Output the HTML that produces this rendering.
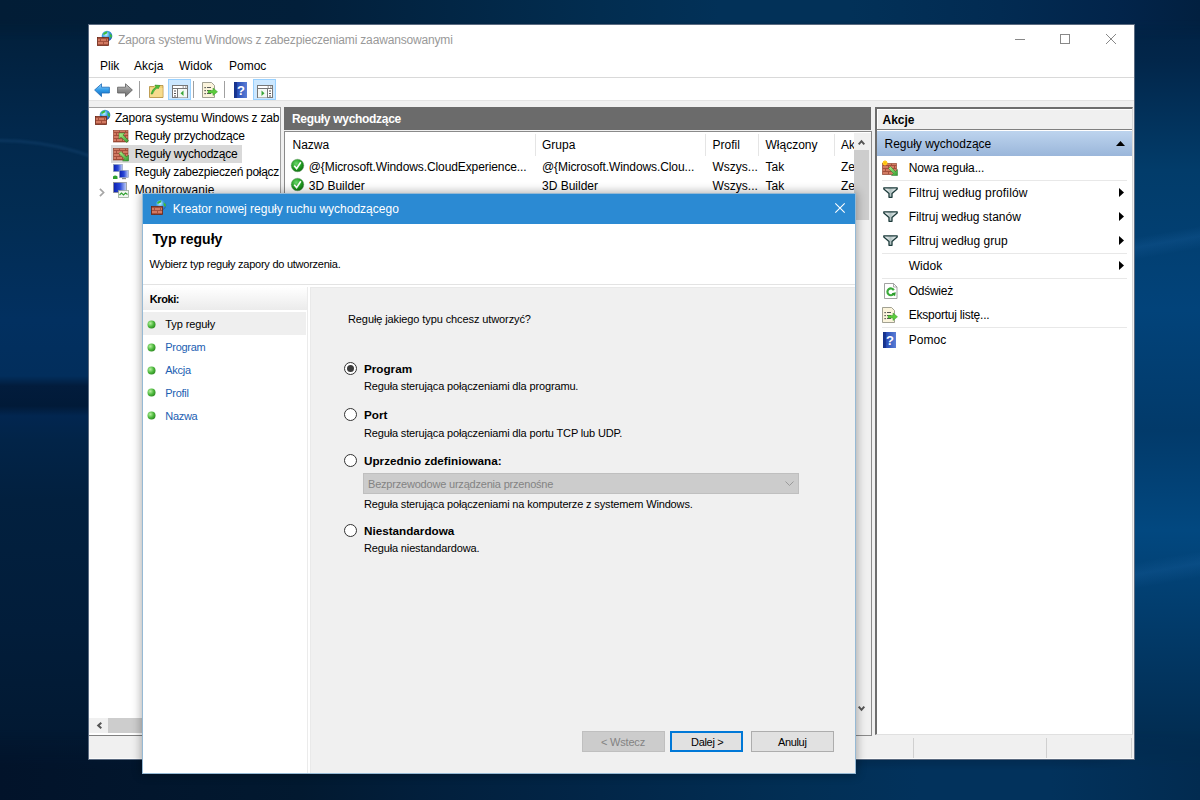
<!DOCTYPE html><html><head><meta charset="utf-8"><style>
*{margin:0;padding:0;box-sizing:border-box}
html,body{width:1200px;height:800px;overflow:hidden}
body{position:relative;font-family:"Liberation Sans",sans-serif;background:#0a1d3a}
.t{position:absolute;white-space:nowrap;line-height:1}
svg{position:absolute;overflow:visible}
.clip{position:absolute;overflow:hidden}
</style></head><body><svg width="0" height="0" style="position:absolute"><defs>
<radialGradient id="globe" cx=".4" cy=".35" r=".75"><stop offset="0" stop-color="#c8f4ff"/><stop offset=".45" stop-color="#3ea0e6"/><stop offset="1" stop-color="#1a4fa0"/></radialGradient>
<pattern id="brick" width="6" height="6" patternUnits="userSpaceOnUse"><rect width="6" height="6" fill="#d27a62"/><rect y="2.2" width="6" height="0.8" fill="#9a4532"/><rect y="5.2" width="6" height="0.8" fill="#9a4532"/><rect x="0" y="0" width="0.8" height="2.2" fill="#9a4532"/><rect x="3" y="3" width="0.8" height="2.2" fill="#9a4532"/></pattern>
<linearGradient id="garrow" x1="0" y1="0" x2="1" y2="1"><stop offset="0" stop-color="#b6f28a"/><stop offset="1" stop-color="#2e9b2e"/></linearGradient>
<linearGradient id="barrow" x1="0" y1="0" x2="0" y2="1"><stop offset="0" stop-color="#9fd8ff"/><stop offset=".5" stop-color="#2f9ae8"/><stop offset="1" stop-color="#1466b8"/></linearGradient>
<linearGradient id="gyarrow" x1="0" y1="0" x2="0" y2="1"><stop offset="0" stop-color="#d0d0d0"/><stop offset=".5" stop-color="#8e8e8e"/><stop offset="1" stop-color="#6a6a6a"/></linearGradient>
<linearGradient id="help" x1="0" y1="0" x2="1" y2="0"><stop offset="0" stop-color="#1a3a99"/><stop offset=".3" stop-color="#2a4fb8"/><stop offset="1" stop-color="#5b7ed6"/></linearGradient>
<linearGradient id="funnel" x1="0" y1="0" x2="1" y2="0"><stop offset="0" stop-color="#ffffff"/><stop offset=".5" stop-color="#b4c4c4"/><stop offset="1" stop-color="#f4fafa"/></linearGradient>
<radialGradient id="chk" cx=".4" cy=".35" r=".7"><stop offset="0" stop-color="#6cd86c"/><stop offset=".6" stop-color="#1f9a1f"/><stop offset="1" stop-color="#0f6a0f"/></radialGradient>
<radialGradient id="dot" cx=".35" cy=".35" r=".7"><stop offset="0" stop-color="#b8f0a0"/><stop offset=".6" stop-color="#4cb83c"/><stop offset="1" stop-color="#2e8a22"/></radialGradient>
<linearGradient id="mon" x1="0" y1="0" x2="1" y2="0"><stop offset="0" stop-color="#0a1fb0"/><stop offset=".5" stop-color="#2a48d8"/><stop offset="1" stop-color="#c6d4f6"/></linearGradient>
</defs></svg>
<div style="position:absolute;left:0px;top:0px;width:1200px;height:800px;background:linear-gradient(180deg,#021e3a 0px,#02203c 30px,#02284c 130px,#022c52 210px,#023060 320px,#022e5c 376px,#021c3c 386px,#011a38 406px,#022650 416px,#022448 440px,#02203f 500px,#021f3d 550px,#021d3a 630px,#021a34 710px,#02162e 800px);"></div>
<div style="position:absolute;left:1090px;top:0px;width:110px;height:800px;background:linear-gradient(180deg,#022040 0px,#02264a 60px,#023c6a 170px,#02437a 310px,#023a6a 430px,#024880 530px,#023560 670px,#022b4f 750px,#022648 800px);-webkit-mask-image:linear-gradient(90deg,transparent 0px,#000 44px);mask-image:linear-gradient(90deg,transparent 0px,#000 44px);"></div>
<div style="position:absolute;left:0px;top:0px;width:1200px;height:40px;background:linear-gradient(90deg,#021d36 0px,#021f3a 300px,#022d50 600px,#023158 720px,#023158 850px,#022b52 1000px,#02244a 1120px,#022040 1200px);-webkit-mask-image:linear-gradient(180deg,#000 20px,transparent 40px);mask-image:linear-gradient(180deg,#000 20px,transparent 40px);"></div>
<div style="position:absolute;left:0px;top:730px;width:1200px;height:70px;background:linear-gradient(90deg,#02132a 0px,#021930 300px,#021f3c 420px,#022648 600px,#022f55 800px,#02325c 920px,#02325c 1050px,#022b50 1200px);-webkit-mask-image:linear-gradient(180deg,transparent 0px,#000 40px);mask-image:linear-gradient(180deg,transparent 0px,#000 40px);"></div>
<div style="position:absolute;left:-400px;top:139px;width:800px;height:1200px;border-radius:50%;border-top:3px solid rgba(80,150,220,0.13);filter:blur(0.8px)"></div>
<div style="position:absolute;left:1100px;top:0px;width:100px;height:800px;background:linear-gradient(170deg,rgba(60,140,220,0) 240px,rgba(60,140,220,0.12) 250px,rgba(60,140,220,0) 262px,rgba(60,140,220,0) 560px,rgba(60,140,220,0.12) 572px,rgba(60,140,220,0) 586px);"></div>
<div style="position:absolute;left:88px;top:24px;width:1047px;height:736px;background:#fff;border:1px solid #5a6a80"></div>
<svg style="left:97px;top:30px" width="16" height="16" viewBox="0 0 16 16"><circle cx="10" cy="6" r="5.3" fill="url(#globe)"/><path d="M5.5 4.2 Q7.5 1.2 10.5 1.2 L9.8 3.6 L7.5 4.8Z M12.5 3 L15 5.5 L14.5 8 L12.8 6.5Z" fill="#3cbc3c"/><rect x="0.5" y="7.5" width="11" height="8" fill="url(#brick)" stroke="#6a2412" stroke-width=".8"/></svg>
<div class="t" style="left:118px;top:33.84px;font-size:12px;color:#999;letter-spacing:-0.17px">Zapora systemu Windows z zabezpieczeniami zaawansowanymi</div>
<div style="position:absolute;left:1015px;top:39px;width:10px;height:1px;background:#888"></div>
<div style="position:absolute;left:1060px;top:34px;width:10px;height:10px;border:1px solid #888"></div>
<svg style="left:1106px;top:34px" width="10" height="10" viewBox="0 0 10 10"><path d="M0 0 L10 10 M10 0 L0 10" stroke="#888" stroke-width="1"/></svg>
<div class="t" style="left:100px;top:59.84px;font-size:12px;color:#000;">Plik</div>
<div class="t" style="left:134px;top:59.84px;font-size:12px;color:#000;">Akcja</div>
<div class="t" style="left:179px;top:59.84px;font-size:12px;color:#000;">Widok</div>
<div class="t" style="left:229px;top:59.84px;font-size:12px;color:#000;">Pomoc</div>
<div style="position:absolute;left:89px;top:77px;width:1045px;height:1px;background:#d9d9d9"></div>
<svg style="left:94px;top:83px" width="16" height="15" viewBox="0 0 16 15"><path d="M0.6 7 L7.5 0.8 L7.5 4.2 L15.4 4.2 L15.4 10 L7.5 10 L7.5 13.6 Z" fill="url(#barrow)" stroke="#1a6ab8" stroke-width=".8" stroke-linejoin="round"/></svg>
<svg style="left:117px;top:83px" width="16" height="15" viewBox="0 0 16 15"><path d="M15.4 7 L8.5 0.8 L8.5 4.2 L0.6 4.2 L0.6 10 L8.5 10 L8.5 13.6 Z" fill="url(#gyarrow)" stroke="#5a5a5a" stroke-width=".8" stroke-linejoin="round"/></svg>
<div style="position:absolute;left:139px;top:81px;width:1px;height:17px;background:#a0a0a0"></div>
<svg style="left:149px;top:83px" width="15" height="15" viewBox="0 0 15 15"><path d="M0.5 3.5 L5 3.5 L6 2.5 L14 2.5 L14 14.5 L0.5 14.5Z" fill="#f2d27a" stroke="#b08a3a" stroke-width=".8"/><rect x="1" y="5" width="12.5" height="9" fill="#f7dc8e"/><path d="M2 11 Q3 6 7 4 L6 2 L11 2.5 L9 6 L8.5 4.8 Q5 6.5 3.5 11Z" fill="#4cc23a" stroke="#2a8a2a" stroke-width=".5"/></svg>
<div style="position:absolute;left:168px;top:79px;width:23px;height:21px;background:#cce8ff;border:1px solid #99d1ff"></div>
<svg style="left:172px;top:85px" width="16" height="13" viewBox="0 0 16 13"><rect x="0.5" y="0.5" width="15" height="12" fill="#fff" stroke="#777" stroke-width="1"/><rect x="1" y="3" width="14" height="1" fill="#777"/><rect x="10.5" y="1.5" width="1.5" height="1" fill="#777"/><rect x="13" y="1.5" width="1.5" height="1" fill="#777"/><rect x="5" y="4" width="1" height="8.5" fill="#777"/><rect x="2" y="5.5" width="2" height="1" fill="#555"/><rect x="2" y="8" width="2" height="1" fill="#555"/><rect x="2" y="10.5" width="2" height="1" fill="#555"/><rect x="6" y="4" width="9" height="8.5" fill="#f4f8f4"/><path d="M11.5 5.5 L8.5 8.2 L11.5 11Z" fill="#3aa83a"/></svg>
<div style="position:absolute;left:193px;top:81px;width:1px;height:17px;background:#a0a0a0"></div>
<svg style="left:202px;top:82px" width="16" height="16" viewBox="0 0 16 16"><path d="M0.5 0.5 L9.5 0.5 L12.5 3.5 L12.5 15.5 L0.5 15.5Z" fill="#fbf4dc" stroke="#8a8a7a" stroke-width=".8"/><rect x="2.5" y="5" width="1.2" height="1.2" fill="#333"/><rect x="5" y="5" width="4" height="1" fill="#555"/><rect x="2.5" y="8" width="1.2" height="1.2" fill="#333"/><rect x="5" y="8" width="4" height="1" fill="#555"/><rect x="2.5" y="11" width="1.2" height="1.2" fill="#333"/><rect x="5" y="11" width="4" height="1" fill="#555"/><path d="M6 8.5 L11 8.5 L11 6 L15.5 9.8 L11 13.5 L11 11 L6 11Z" fill="#5ccc3c" stroke="#3a9a2a" stroke-width=".5"/></svg>
<div style="position:absolute;left:224px;top:81px;width:1px;height:17px;background:#a0a0a0"></div>
<svg style="left:234px;top:82px" width="13" height="16" viewBox="0 0 13 16"><rect x="0" y="0" width="13" height="16" fill="url(#help)"/><rect x="0" y="0" width="3" height="16" fill="#132c80" opacity=".6"/><text x="7.0" y="13" font-family="Liberation Sans" font-weight="bold" font-size="13" fill="#fff" text-anchor="middle">?</text></svg>
<div style="position:absolute;left:253px;top:79px;width:23px;height:21px;background:#cce8ff;border:1px solid #99d1ff"></div>
<svg style="left:257px;top:85px" width="16" height="13" viewBox="0 0 16 13"><rect x="0.5" y="0.5" width="15" height="12" fill="#fff" stroke="#777" stroke-width="1"/><rect x="1" y="3" width="14" height="1" fill="#777"/><rect x="10.5" y="1.5" width="1.5" height="1" fill="#777"/><rect x="13" y="1.5" width="1.5" height="1" fill="#777"/><rect x="10" y="4" width="1" height="8.5" fill="#777"/><rect x="12" y="5.5" width="2" height="1" fill="#555"/><rect x="12" y="8" width="2" height="1" fill="#555"/><rect x="12" y="10.5" width="2" height="1" fill="#555"/><rect x="1" y="4" width="9" height="8.5" fill="#f4f8f4"/><path d="M4.5 5.5 L7.5 8.2 L4.5 11Z" fill="#3aa83a"/></svg>
<div style="position:absolute;left:89px;top:100px;width:1045px;height:1px;background:#e3e3e3"></div>
<div style="position:absolute;left:89px;top:101px;width:1045px;height:658px;background:#f0f0f0"></div>
<div style="position:absolute;left:89px;top:107px;width:192px;height:629px;background:#fff;border-right:1px solid #a0a0a0;border-top:1px solid #a0a0a0;border-bottom:1px solid #808080"></div>
<div class="clip" style="left:89px;top:108px;width:191px;height:90px">
<svg style="left:6px;top:1px" width="16" height="16" viewBox="0 0 16 16"><circle cx="10" cy="6" r="5.3" fill="url(#globe)"/><path d="M5.5 4.2 Q7.5 1.2 10.5 1.2 L9.8 3.6 L7.5 4.8Z M12.5 3 L15 5.5 L14.5 8 L12.8 6.5Z" fill="#3cbc3c"/><rect x="0.5" y="7.5" width="11" height="8" fill="url(#brick)" stroke="#6a2412" stroke-width=".8"/></svg>
<div style="position:absolute;left:22px;top:37px;width:131px;height:18px;background:#d9d9d9"></div>
<div class="t" style="left:26px;top:3.84px;font-size:12px;color:#000;letter-spacing:-0.21px">Zapora systemu Windows z zab</div>
<div class="t" style="left:45.69999999999999px;top:21.84px;font-size:12px;color:#000;letter-spacing:-0.25px">Reguły przychodzące</div>
<div class="t" style="left:45.69999999999999px;top:39.84px;font-size:12px;color:#000;letter-spacing:-0.23px">Reguły wychodzące</div>
<div class="t" style="left:45.69999999999999px;top:57.84px;font-size:12px;color:#000;letter-spacing:-0.3px">Reguły zabezpieczeń połącz</div>
<div class="t" style="left:45.69999999999999px;top:75.84px;font-size:12px;color:#000;letter-spacing:0.15px">Monitorowanie</div>
<svg style="left:24px;top:22px" width="16" height="14" viewBox="0 0 16 14"><rect x="0.5" y="0.5" width="14.5" height="11.5" fill="url(#brick)" stroke="#8a3a22" stroke-width=".6"/><path d="M6 3 L12 3 L10 5 L15.5 10.5 L13.5 12.5 L8 7 L6 9Z" fill="url(#garrow)" stroke="#2a7a2a" stroke-width=".5"/></svg>
<svg style="left:24px;top:40px" width="16" height="14" viewBox="0 0 16 14"><rect x="0.5" y="0.5" width="14.5" height="11.5" fill="url(#brick)" stroke="#8a3a22" stroke-width=".6"/><path d="M15.5 13 L9.5 13 L11.5 11 L6 5.5 L8 3.5 L13.5 9 L15.5 7Z" fill="url(#garrow)" stroke="#2a7a2a" stroke-width=".5"/></svg>
<svg style="left:24px;top:56px" width="16" height="16" viewBox="0 0 16 16"><rect x="0.5" y="0.5" width="9" height="7" fill="url(#mon)" stroke="#8a9ab0" stroke-width=".6"/><rect x="6.5" y="6.5" width="9" height="7" fill="url(#mon)" stroke="#8a9ab0" stroke-width=".6"/><rect x="9" y="14" width="4" height="1.2" fill="#8a8a8a"/><path d="M0 15 L0 12.5 Q2 10.5 4.5 12.5 L4.5 15Z" fill="#2ea02e"/></svg>
<svg style="left:24px;top:74px" width="16" height="16" viewBox="0 0 16 16"><rect x="0.5" y="0.5" width="13" height="10" fill="url(#mon)" stroke="#8a8a8a" stroke-width=".7"/><rect x="5.5" y="8.5" width="10" height="7" fill="#eef4ee" stroke="#8aa08a" stroke-width=".7"/><path d="M6.5 13 L8.5 11 L10.5 13 L12.5 11 L14.5 12.5" fill="none" stroke="#2ea02e" stroke-width="1.1"/></svg>
<svg style="left:10px;top:80px" width="6" height="9" viewBox="0 0 6 9"><path d="M0.9 0.9 L4.6 4.5 L0.9 8.1" fill="none" stroke="#a6a6a6" stroke-width="1.7"/></svg>
</div>
<div style="position:absolute;left:89px;top:718px;width:191px;height:15px;background:#f0f0f0"></div>
<div style="position:absolute;left:108px;top:718px;width:172px;height:15px;background:#cdcdcd"></div>
<svg style="left:96px;top:722px" width="6" height="7" viewBox="0 0 6 7"><path d="M5.3 0.7 L2.2 3.5 L5.3 6.3" fill="none" stroke="#555" stroke-width="2"/></svg>
<div style="position:absolute;left:284px;top:107px;width:587px;height:23px;background:#6b6b6b"></div>
<div class="t" style="left:292px;top:112.84px;font-size:12px;color:#fff;font-weight:bold;letter-spacing:-0.3px">Reguły wychodzące</div>
<div style="position:absolute;left:284px;top:131px;width:588px;height:605px;background:#fff;border:1px solid #8a8a8a"></div>
<div class="t" style="left:292.5px;top:138.84px;font-size:12px;color:#000;">Nazwa</div>
<div style="position:absolute;left:535px;top:134px;width:1px;height:22px;background:#e5e5e5"></div>
<div class="t" style="left:542px;top:138.84px;font-size:12px;color:#000;">Grupa</div>
<div style="position:absolute;left:705px;top:134px;width:1px;height:22px;background:#e5e5e5"></div>
<div class="t" style="left:712.5px;top:138.84px;font-size:12px;color:#000;">Profil</div>
<div style="position:absolute;left:758px;top:134px;width:1px;height:22px;background:#e5e5e5"></div>
<div class="t" style="left:765.5px;top:138.84px;font-size:12px;color:#000;">Włączony</div>
<div style="position:absolute;left:834px;top:134px;width:1px;height:22px;background:#e5e5e5"></div>
<div class="clip" style="left:836px;top:132px;width:18px;height:62px">
<div class="t" style="left:5px;top:6.84px;font-size:12px;color:#000;">Akcja</div>
<div class="t" style="left:5px;top:28.84px;font-size:12px;color:#000;">Zezwalaj</div>
<div class="t" style="left:5px;top:47.84px;font-size:12px;color:#000;">Zezwalaj</div>
</div>
<svg style="left:291.4px;top:159.3px" width="13" height="13" viewBox="0 0 13 13"><circle cx="6.5" cy="6.5" r="6.3" fill="url(#chk)" stroke="#5a8a5a" stroke-width=".4"/><path d="M3.2 6.8 L5.6 9.6 L9.8 3.2" fill="none" stroke="#fff" stroke-width="1.6"/></svg>
<svg style="left:291.4px;top:178.0px" width="13" height="13" viewBox="0 0 13 13"><circle cx="6.5" cy="6.5" r="6.3" fill="url(#chk)" stroke="#5a8a5a" stroke-width=".4"/><path d="M3.2 6.8 L5.6 9.6 L9.8 3.2" fill="none" stroke="#fff" stroke-width="1.6"/></svg>
<div class="t" style="left:308.75px;top:160.84px;font-size:12px;color:#000;letter-spacing:-0.1px">@{Microsoft.Windows.CloudExperience...</div>
<div class="t" style="left:542px;top:160.84px;font-size:12px;color:#000;letter-spacing:-0.1px">@{Microsoft.Windows.Clou...</div>
<div class="t" style="left:712.5px;top:160.84px;font-size:12px;color:#000;">Wszys...</div>
<div class="t" style="left:765.5px;top:160.84px;font-size:12px;color:#000;">Tak</div>
<div class="t" style="left:308.75px;top:179.84px;font-size:12px;color:#000;">3D Builder</div>
<div class="t" style="left:542px;top:179.84px;font-size:12px;color:#000;">3D Builder</div>
<div class="t" style="left:712.5px;top:179.84px;font-size:12px;color:#000;">Wszys...</div>
<div class="t" style="left:765.5px;top:179.84px;font-size:12px;color:#000;">Tak</div>
<div style="position:absolute;left:854px;top:133px;width:17px;height:602px;background:#f0f0f0"></div>
<div style="position:absolute;left:854px;top:150px;width:15px;height:70px;background:#cdcdcd"></div>
<svg style="left:858px;top:139px" width="7" height="6" viewBox="0 0 7 6"><path d="M0.7 5.3 L3.5 2.2 L6.3 5.3" fill="none" stroke="#555" stroke-width="2"/></svg>
<svg style="left:858px;top:706px" width="7" height="6" viewBox="0 0 7 6"><path d="M0.7 0.7 L3.5 3.8 L6.3 0.7" fill="none" stroke="#555" stroke-width="2"/></svg>
<div style="position:absolute;left:875px;top:107px;width:258px;height:628px;background:#fff;border-top:2px solid #6d6d6d;border-left:2px solid #6d6d6d;border-right:1px solid #d8d8d8;border-bottom:1px solid #e0e0e0"></div>
<div style="position:absolute;left:878px;top:110px;width:254px;height:19px;background:#f0f0f0"></div>
<div style="position:absolute;left:877px;top:129px;width:255px;height:1px;background:#808080"></div>
<div class="t" style="left:882.5px;top:113.84px;font-size:12px;color:#000;font-weight:bold;">Akcje</div>
<div style="position:absolute;left:877px;top:131px;width:255px;height:25px;background:linear-gradient(#bdd4ee,#9ab6da)"></div>
<div class="t" style="left:884.5px;top:137.84px;font-size:12px;color:#000;">Reguły wychodzące</div>
<svg style="left:1116px;top:141px" width="9" height="5" viewBox="0 0 9 5"><path d="M0 5 L4.5 0 L9 5Z" fill="#000"/></svg>
<div class="t" style="left:908.8px;top:161.84px;font-size:12px;color:#000;letter-spacing:-0.14px">Nowa reguła...</div>
<div class="t" style="left:908.8px;top:186.84px;font-size:12px;color:#000;letter-spacing:0.15px">Filtruj według profilów</div>
<div class="t" style="left:908.8px;top:210.84px;font-size:12px;color:#000;letter-spacing:0px">Filtruj według stanów</div>
<div class="t" style="left:908.8px;top:234.84px;font-size:12px;color:#000;letter-spacing:0.05px">Filtruj według grup</div>
<div class="t" style="left:908.8px;top:259.84px;font-size:12px;color:#000;letter-spacing:0px">Widok</div>
<div class="t" style="left:908.8px;top:284.84px;font-size:12px;color:#000;letter-spacing:-0.28px">Odśwież</div>
<div class="t" style="left:908.8px;top:308.84px;font-size:12px;color:#000;letter-spacing:-0.23px">Eksportuj listę...</div>
<div class="t" style="left:908.8px;top:333.84px;font-size:12px;color:#000;letter-spacing:0px">Pomoc</div>
<div style="position:absolute;left:882px;top:180px;width:245px;height:1px;background:#e8e8e8"></div>
<div style="position:absolute;left:882px;top:253px;width:245px;height:1px;background:#e8e8e8"></div>
<div style="position:absolute;left:882px;top:278px;width:245px;height:1px;background:#e8e8e8"></div>
<div style="position:absolute;left:882px;top:327px;width:245px;height:1px;background:#e8e8e8"></div>
<svg style="left:1119px;top:188px" width="5" height="9" viewBox="0 0 5 9"><path d="M0 0 L5 4.5 L0 9Z" fill="#000"/></svg>
<svg style="left:1119px;top:212px" width="5" height="9" viewBox="0 0 5 9"><path d="M0 0 L5 4.5 L0 9Z" fill="#000"/></svg>
<svg style="left:1119px;top:236px" width="5" height="9" viewBox="0 0 5 9"><path d="M0 0 L5 4.5 L0 9Z" fill="#000"/></svg>
<svg style="left:1119px;top:261px" width="5" height="9" viewBox="0 0 5 9"><path d="M0 0 L5 4.5 L0 9Z" fill="#000"/></svg>
<svg style="left:882px;top:160px" width="16" height="16" viewBox="0 0 16 16"><rect x="0.5" y="3.5" width="14" height="11" fill="url(#brick)" stroke="#8a3a22" stroke-width=".6"/><path d="M15.5 15.5 L9.5 15.5 L11.5 13.5 L6.5 8.5 L8.5 6.5 L13.5 11.5 L15.5 9.5Z" fill="url(#garrow)" stroke="#2a7a2a" stroke-width=".5"/><circle cx="3" cy="3" r="2.2" fill="#ffd23a"/><path d="M3 0 L3 6 M0 3 L6 3 M1 1 L5 5 M5 1 L1 5" stroke="#ffc000" stroke-width=".7"/></svg>
<svg style="left:883px;top:187px" width="15" height="11" viewBox="0 0 15 11"><path d="M0.8 0.8 L14.2 0.8 L14.2 2 L9 6.5 L9 10.3 L6 10.3 L6 6.5 L0.8 2Z" fill="url(#funnel)" stroke="#1d3b3b" stroke-width="1.3" stroke-linejoin="round"/></svg>
<svg style="left:883px;top:211px" width="15" height="11" viewBox="0 0 15 11"><path d="M0.8 0.8 L14.2 0.8 L14.2 2 L9 6.5 L9 10.3 L6 10.3 L6 6.5 L0.8 2Z" fill="url(#funnel)" stroke="#1d3b3b" stroke-width="1.3" stroke-linejoin="round"/></svg>
<svg style="left:883px;top:235px" width="15" height="11" viewBox="0 0 15 11"><path d="M0.8 0.8 L14.2 0.8 L14.2 2 L9 6.5 L9 10.3 L6 10.3 L6 6.5 L0.8 2Z" fill="url(#funnel)" stroke="#1d3b3b" stroke-width="1.3" stroke-linejoin="round"/></svg>
<svg style="left:884px;top:283px" width="14" height="16" viewBox="0 0 14 16"><path d="M0.5 0.5 L9.5 0.5 L13 4 L13 15.5 L0.5 15.5Z" fill="#fff" stroke="#8a8a8a" stroke-width=".8"/><path d="M9.5 0.5 L9.5 4 L13 4" fill="none" stroke="#8a8a8a" stroke-width=".7"/><path d="M9.8 7.2 A3.4 3.4 0 1 0 9.6 10.8" fill="none" stroke="#3aaa3a" stroke-width="2.2"/><path d="M7.6 10.2 L11.8 9.2 L11 13.2Z" fill="#2a9a2a"/></svg>
<svg style="left:882px;top:307px" width="16" height="16" viewBox="0 0 16 16"><path d="M0.5 0.5 L9.5 0.5 L12.5 3.5 L12.5 15.5 L0.5 15.5Z" fill="#fbf4dc" stroke="#8a8a7a" stroke-width=".8"/><rect x="2.5" y="5" width="1.2" height="1.2" fill="#333"/><rect x="5" y="5" width="4" height="1" fill="#555"/><rect x="2.5" y="8" width="1.2" height="1.2" fill="#333"/><rect x="5" y="8" width="4" height="1" fill="#555"/><rect x="2.5" y="11" width="1.2" height="1.2" fill="#333"/><rect x="5" y="11" width="4" height="1" fill="#555"/><path d="M6 8.5 L11 8.5 L11 6 L15.5 9.8 L11 13.5 L11 11 L6 11Z" fill="#5ccc3c" stroke="#3a9a2a" stroke-width=".5"/></svg>
<svg style="left:883px;top:332px" width="13" height="16" viewBox="0 0 13 16"><rect x="0" y="0" width="13" height="16" fill="url(#help)"/><rect x="0" y="0" width="3" height="16" fill="#132c80" opacity=".6"/><text x="7.0" y="13" font-family="Liberation Sans" font-weight="bold" font-size="13" fill="#fff" text-anchor="middle">?</text></svg>
<div style="position:absolute;left:89px;top:736px;width:1045px;height:22px;background:#f0f0f0"></div>
<div style="position:absolute;left:89px;top:758px;width:1045px;height:1px;background:#fafafa"></div>
<div style="position:absolute;left:913px;top:738px;width:1px;height:20px;background:#d0d0d0"></div>
<div style="position:absolute;left:1046px;top:738px;width:1px;height:20px;background:#d0d0d0"></div>
<div style="position:absolute;left:1131px;top:738px;width:1px;height:20px;background:#d0d0d0"></div>
<div style="position:absolute;left:142px;top:193px;width:714px;height:581px;background:#f0f0f0;border:1px solid #96b9d4;box-shadow:0 0 9px 1px rgba(0,0,0,0.32)"></div>
<div style="position:absolute;left:143px;top:194px;width:712px;height:30px;background:#2b8ad3"></div>
<svg style="left:151px;top:199px" width="16" height="16" viewBox="0 0 16 16"><circle cx="10" cy="6" r="5.3" fill="url(#globe)"/><path d="M5.5 4.2 Q7.5 1.2 10.5 1.2 L9.8 3.6 L7.5 4.8Z M12.5 3 L15 5.5 L14.5 8 L12.8 6.5Z" fill="#3cbc3c"/><rect x="0.5" y="7.5" width="11" height="8" fill="url(#brick)" stroke="#6a2412" stroke-width=".8"/></svg>
<div class="t" style="left:172.7px;top:202.84px;font-size:12px;color:#fff;">Kreator nowej reguły ruchu wychodzącego</div>
<svg style="left:835px;top:203px" width="10" height="10" viewBox="0 0 10 10"><path d="M0.3 0.3 L9.7 9.7 M9.7 0.3 L0.3 9.7" stroke="#fff" stroke-width="1.1"/></svg>
<div style="position:absolute;left:143px;top:224px;width:712px;height:60px;background:#fff"></div>
<div class="t" style="left:152.6px;top:232.15px;font-size:14px;color:#000;font-weight:bold;">Typ reguły</div>
<div class="t" style="left:149.4px;top:258.69px;font-size:11px;color:#000;letter-spacing:-0.25px">Wybierz typ reguły zapory do utworzenia.</div>
<div style="position:absolute;left:143px;top:284px;width:712px;height:1px;background:#e3e3e3"></div>
<div style="position:absolute;left:143px;top:285px;width:712px;height:488px;background:#fff"></div>
<div style="position:absolute;left:310px;top:287px;width:545px;height:486px;background:#f0f0f0;border-top:1px solid #e9e9e9;border-left:1px solid #e9e9e9"></div>
<div style="position:absolute;left:307px;top:287px;width:1px;height:486px;background:#ebebeb"></div>
<div style="position:absolute;left:143px;top:287px;width:164px;height:23px;background:linear-gradient(#fff,#ebebeb)"></div>
<div class="t" style="left:149.75px;top:293.69px;font-size:11px;color:#000;font-weight:bold;letter-spacing:-0.4px">Kroki:</div>
<div style="position:absolute;left:143px;top:312px;width:163px;height:23px;background:#efefef"></div>
<div class="t" style="left:165.3px;top:318.69px;font-size:11px;color:#000;letter-spacing:-0.1px">Typ reguły</div>
<svg style="left:147px;top:320.0px" width="9" height="9" viewBox="0 0 9 9"><circle cx="4.5" cy="4.5" r="4" fill="url(#dot)"/></svg>
<svg style="left:147px;top:342.8px" width="9" height="9" viewBox="0 0 9 9"><circle cx="4.5" cy="4.5" r="4" fill="url(#dot)"/></svg>
<svg style="left:147px;top:365.5px" width="9" height="9" viewBox="0 0 9 9"><circle cx="4.5" cy="4.5" r="4" fill="url(#dot)"/></svg>
<svg style="left:147px;top:388.2px" width="9" height="9" viewBox="0 0 9 9"><circle cx="4.5" cy="4.5" r="4" fill="url(#dot)"/></svg>
<svg style="left:147px;top:411.3px" width="9" height="9" viewBox="0 0 9 9"><circle cx="4.5" cy="4.5" r="4" fill="url(#dot)"/></svg>
<div class="t" style="left:165.3px;top:341.69px;font-size:11px;color:#1c60b2;letter-spacing:-0.3px">Program</div>
<div class="t" style="left:165.3px;top:364.69px;font-size:11px;color:#1c60b2;letter-spacing:-0.3px">Akcja</div>
<div class="t" style="left:165.3px;top:387.69px;font-size:11px;color:#1c60b2;letter-spacing:-0.3px">Profil</div>
<div class="t" style="left:165.3px;top:410.69px;font-size:11px;color:#1c60b2;letter-spacing:-0.3px">Nazwa</div>
<div class="t" style="left:348px;top:313.69px;font-size:11px;color:#000;letter-spacing:-0.1px">Regułę jakiego typu chcesz utworzyć?</div>
<div style="position:absolute;left:344px;top:362.0px;width:13px;height:13px;border:1.3px solid #333;border-radius:50%;background:#fff"></div>
<div class="t" style="left:364px;top:363.10px;font-size:11.7px;color:#000;font-weight:bold;">Program</div>
<div class="t" style="left:364px;top:380.69px;font-size:11px;color:#000;letter-spacing:-0.15px">Reguła sterująca połączeniami dla programu.</div>
<div style="position:absolute;left:344px;top:408.0px;width:13px;height:13px;border:1.3px solid #333;border-radius:50%;background:#fff"></div>
<div class="t" style="left:364px;top:409.10px;font-size:11.7px;color:#000;font-weight:bold;">Port</div>
<div class="t" style="left:364px;top:427.69px;font-size:11px;color:#000;letter-spacing:-0.15px">Reguła sterująca połączeniami dla portu TCP lub UDP.</div>
<div style="position:absolute;left:344px;top:454.0px;width:13px;height:13px;border:1.3px solid #333;border-radius:50%;background:#fff"></div>
<div class="t" style="left:364px;top:455.10px;font-size:11.7px;color:#000;font-weight:bold;">Uprzednio zdefiniowana:</div>
<div class="t" style="left:364px;top:498.69px;font-size:11px;color:#000;letter-spacing:-0.15px">Reguła sterująca połączeniami na komputerze z systemem Windows.</div>
<div style="position:absolute;left:344px;top:524.0px;width:13px;height:13px;border:1.3px solid #333;border-radius:50%;background:#fff"></div>
<div class="t" style="left:364px;top:525.10px;font-size:11.7px;color:#000;font-weight:bold;">Niestandardowa</div>
<div class="t" style="left:364px;top:542.69px;font-size:11px;color:#000;letter-spacing:-0.15px">Reguła niestandardowa.</div>
<div style="position:absolute;left:347px;top:365px;width:7px;height:7px;background:#3c3c3c;border-radius:50%"></div>
<div style="position:absolute;left:363px;top:473px;width:436px;height:21px;background:#cccccc;border:1px solid #bfbfbf"></div>
<div class="t" style="left:368px;top:478.69px;font-size:11px;color:#838383;letter-spacing:-0.2px">Bezprzewodowe urządzenia przenośne</div>
<svg style="left:785px;top:481px" width="9" height="5" viewBox="0 0 9 5"><path d="M0.5 0.5 L4.5 4.5 L8.5 0.5" fill="none" stroke="#9a9a9a" stroke-width="1"/></svg>
<div style="position:absolute;left:582px;top:731px;width:83px;height:21px;background:#cccccc;border:1px solid #bfbfbf"></div>
<div class="t" style="left:601px;top:736.69px;font-size:11px;color:#838383;letter-spacing:-0.2px">&lt; Wstecz</div>
<div style="position:absolute;left:670px;top:731px;width:73px;height:21px;background:#e1e1e1;border:2px solid #0078d7"></div>
<div class="t" style="left:691px;top:736.69px;font-size:11px;color:#000;letter-spacing:-0.3px">Dalej &gt;</div>
<div style="position:absolute;left:751px;top:731px;width:83px;height:21px;background:#e1e1e1;border:1px solid #adadad"></div>
<div class="t" style="left:778px;top:736.69px;font-size:11px;color:#000;letter-spacing:-0.35px">Anuluj</div></body></html>
